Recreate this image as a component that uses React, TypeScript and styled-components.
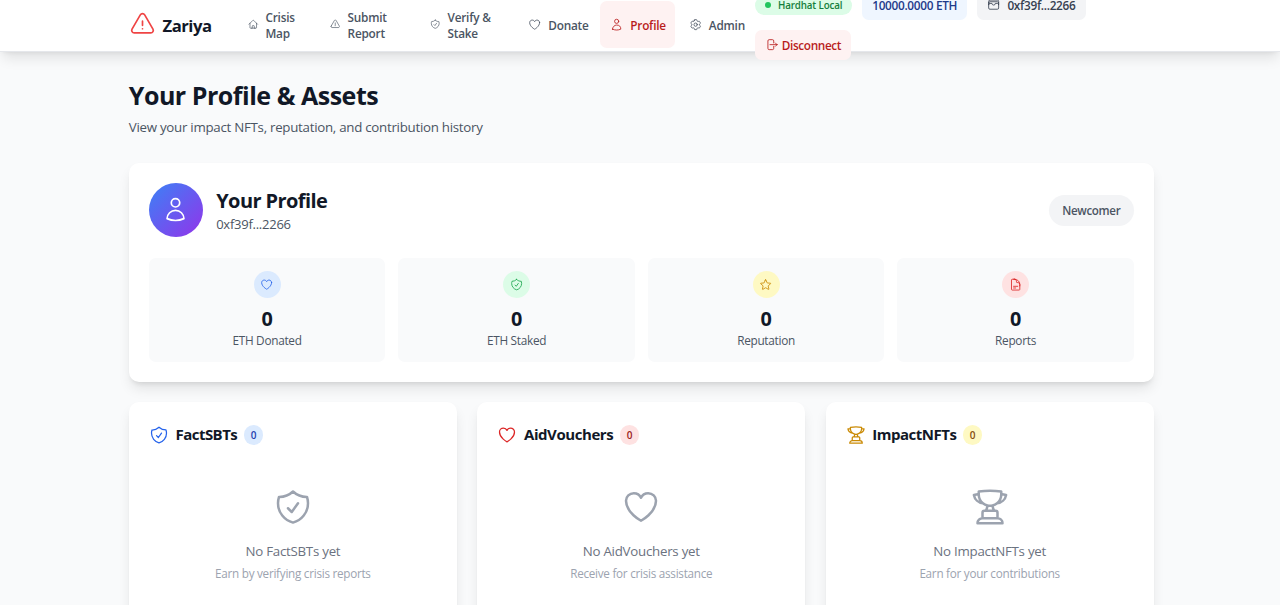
import React from "react";
import styled, { createGlobalStyle } from "styled-components";
import {
  HiOutlineArrowRightOnRectangle,
  HiOutlineCog6Tooth,
  HiOutlineDocumentText,
  HiOutlineExclamationTriangle,
  HiOutlineHeart,
  HiOutlineHome,
  HiOutlineShieldCheck,
  HiOutlineStar,
  HiOutlineTrophy,
  HiOutlineUser,
  HiOutlineWallet,
} from "react-icons/hi2";

const GlobalStyle = createGlobalStyle`
  *, *::before, *::after { box-sizing: border-box; }
  html { background: #f9fafb; }
  body {
    margin: 0;
    height: 605px;
    overflow: hidden;
    background: #f9fafb;
    color: #111827;
    font-family: "Open Sans", "Noto Sans", sans-serif;
  }
  h1, h2, h3, p { margin: 0; }
  svg { display: block; flex-shrink: 0; }
  button { font: inherit; border: 0; }
`;

const Page = styled.div`
  height: 605px;
  overflow: hidden;
`;

const Header = styled.header`
  position: relative;
  display: flex;
  align-items: center;
  height: 51.5px;
  padding: 0 0 2px 129px;
  background: #fff;
  border-bottom: 1px solid #e5e7eb;
  box-shadow: 0 8px 12.5px -2.5px rgba(0, 0, 0, 0.1), 0 3.3px 5px -3.3px rgba(0, 0, 0, 0.1);
`;

const Brand = styled.div`
  display: flex;
  align-items: center;
  gap: 6.5px;
  width: 109px;
  flex-shrink: 0;
  svg { color: #ef4444; }
`;

const BrandName = styled.span`
  font-size: 16.7px;
  font-weight: 700;
  line-height: 23px;
  padding-top: 3px;
  letter-spacing: -0.5px;
`;

const Nav = styled.nav`
  display: flex;
  align-items: center;
  gap: 3.33px;
`;

const NavItem = styled.a<{ $width: number; $active?: boolean }>`
  display: flex;
  align-items: center;
  gap: 6.67px;
  flex-shrink: 0;
  width: ${(p) => p.$width}px;
  height: 47px;
  padding: 0 0 0 10.3px;
  border-radius: 6.7px;
  font-size: 11.8px;
  font-weight: 600;
  line-height: 16.7px;
  letter-spacing: -0.22px;
  color: ${(p) => (p.$active ? "#b91c1c" : "#4b5563")};
  background: ${(p) => (p.$active ? "#fef2f2" : "transparent")};
  span { padding-top: 2px; }
`;

const Wallet = styled.div`
  display: flex;
  flex-wrap: wrap;
  align-items: center;
  align-content: center;
  gap: 10px;
  width: 350px;
  flex-shrink: 0;
  height: 70px;
  margin-top: 1.6px;
  margin-left: 0.3px;
`;

const Network = styled.div`
  display: flex;
  align-items: center;
  gap: 6.7px;
  width: 97.5px;
  height: 19px;
  padding: 0 9.7px;
  border-radius: 10px;
  background: #dcfce7;
  color: #15803d;
  font-size: 9.8px;
  font-weight: 600;
  letter-spacing: -0.15px;
  white-space: nowrap;
`;

const Dot = styled.i`
  width: 6.7px;
  height: 6.7px;
  flex-shrink: 0;
  border-radius: 50%;
  background: #22c55e;
`;

const Chip = styled.div<{ $width: number; $bg: string; $color: string; $gap?: number; $track?: number }>`
  display: flex;
  align-items: center;
  justify-content: center;
  gap: ${(p) => p.$gap ?? 0}px;
  width: ${(p) => p.$width}px;
  height: 30px;
  padding: 0;
  border-radius: 6.7px;
  background: ${(p) => p.$bg};
  color: ${(p) => p.$color};
  font-size: 11.8px;
  font-weight: 600;
  white-space: nowrap;
  letter-spacing: ${(p) => p.$track ?? 0}px;
`;

const Main = styled.main`
  width: 1025px;
  margin-left: 128.8px;
  padding-top: 26px;
`;

const Title = styled.h1`
  font-size: 25px;
  line-height: 34px;
  font-weight: 700;
  letter-spacing: -0.48px;
`;

const Subtitle = styled.p`
  margin-top: 5px;
  font-size: 13.3px;
  line-height: 20px;
  letter-spacing: -0.27px;
  color: #4b5563;
`;

const Card = styled.section`
  background: #fff;
  border-radius: 10px;
  box-shadow: 0 8px 12.5px -2.5px rgba(0, 0, 0, 0.1), 0 3.3px 5px -3.3px rgba(0, 0, 0, 0.1);
`;

const ProfileCard = styled(Card)`
  height: 218.6px;
  margin-top: 26.8px;
  padding: 19.6px 20px;
`;

const ProfileHead = styled.div`
  display: flex;
  align-items: center;
  gap: 13.4px;
  height: 54px;
`;

const Avatar = styled.div`
  display: grid;
  place-items: center;
  width: 54px;
  height: 54px;
  border-radius: 50%;
  color: #fff;
  background: linear-gradient(135deg, #3b82f6, #9333ea);
`;

const Identity = styled.div`
  flex: 1;
  padding-top: 2px;
`;

const Name = styled.h2`
  font-size: 20px;
  line-height: 27px;
  font-weight: 700;
  letter-spacing: -0.58px;
`;

const Address = styled.p`
  font-size: 13px;
  line-height: 20px;
  letter-spacing: -0.25px;
  color: #4b5563;
`;

const Level = styled.span`
  display: grid;
  place-items: center;
  width: 85px;
  height: 31px;
  margin-top: 1px;
  border-radius: 16px;
  background: #f3f4f6;
  color: #4b5563;
  font-size: 11.6px;
  font-weight: 600;
  letter-spacing: -0.35px;
  padding-top: 1px;
`;

const Stats = styled.div`
  display: grid;
  grid-template-columns: repeat(4, 1fr);
  gap: 13px;
  margin-top: 20.8px;
`;

const Stat = styled.div`
  display: flex;
  flex-direction: column;
  align-items: center;
  height: 104px;
  padding-top: 13.3px;
  border-radius: 6.7px;
  background: #f9fafb;
`;

const StatIcon = styled.div<{ $bg: string; $color: string }>`
  display: grid;
  place-items: center;
  width: 27px;
  height: 27px;
  border-radius: 50%;
  background: ${(p) => p.$bg};
  color: ${(p) => p.$color};
`;

const StatValue = styled.strong`
  margin-top: 7px;
  font-size: 19.8px;
  line-height: 27px;
  font-weight: 700;
`;

const StatLabel = styled.span`
  font-size: 11.8px;
  line-height: 17px;
  color: #4b5563;
  letter-spacing: -0.28px;
`;

const Collections = styled.div`
  display: grid;
  grid-template-columns: repeat(3, 328.2px);
  gap: 20.2px;
  margin-top: 20.3px;
`;

const Collection = styled(Card)`
  height: 260px;
  padding: 19.8px 20px;
`;

const CollectionHead = styled.div<{ $color: string }>`
  display: flex;
  align-items: center;
  gap: 6.8px;
  height: 26px;
  svg { color: ${(p) => p.$color}; }
`;

const CollectionName = styled.h3<{ $track: number }>`
  font-size: 15px;
  line-height: 23px;
  font-weight: 700;
  letter-spacing: ${(p) => p.$track}px;
`;

const Count = styled.span<{ $bg: string; $color: string }>`
  display: grid;
  place-items: center;
  width: 19px;
  height: 20px;
  border-radius: 10px;
  background: ${(p) => p.$bg};
  color: ${(p) => p.$color};
  font-size: 10px;
  font-weight: 600;
`;

const Empty = styled.div`
  display: flex;
  flex-direction: column;
  align-items: center;
  padding-top: 39px;
  color: #9ca3af;
`;

const EmptyTitle = styled.p`
  margin-top: 14px;
  font-size: 13.3px;
  line-height: 20px;
  color: #6b7280;
  letter-spacing: -0.25px;
`;

const EmptyHint = styled.p`
  margin-top: 4px;
  font-size: 11.7px;
  line-height: 17px;
  letter-spacing: -0.26px;
`;

const navItems = [
  { label: ["Crisis", "Map"], icon: HiOutlineHome, width: 78.8, size: 10.5 },
  { label: ["Submit", "Report"], icon: HiOutlineExclamationTriangle, width: 96.6, size: 10.5 },
  { label: ["Verify &", "Stake"], icon: HiOutlineShieldCheck, width: 94.6, size: 10.5 },
  { label: ["Donate"], icon: HiOutlineHeart, width: 78.7, size: 13.3 },
  { label: ["Profile"], icon: HiOutlineUser, width: 75.3, size: 13.3, active: true },
  { label: ["Admin"], icon: HiOutlineCog6Tooth, width: 76, size: 13.3 },
];

const stats = [
  { label: "ETH Donated", icon: HiOutlineHeart, bg: "#dbeafe", color: "#2563eb" },
  { label: "ETH Staked", icon: HiOutlineShieldCheck, bg: "#dcfce7", color: "#16a34a" },
  { label: "Reputation", icon: HiOutlineStar, bg: "#fef9c3", color: "#ca8a04" },
  { label: "Reports", icon: HiOutlineDocumentText, bg: "#fee2e2", color: "#dc2626" },
];

const collections = [
  { name: "FactSBTs", hint: "Earn by verifying crisis reports", icon: HiOutlineShieldCheck, color: "#2563eb", bg: "#dbeafe", count: "#1e40af", track: -0.55 },
  { name: "AidVouchers", hint: "Receive for crisis assistance", icon: HiOutlineHeart, color: "#dc2626", bg: "#fee2e2", count: "#991b1b", track: -0.43 },
  { name: "ImpactNFTs", hint: "Earn for your contributions", icon: HiOutlineTrophy, color: "#ca8a04", bg: "#fef9c3", count: "#854d0e", track: -0.5 },
];

export default function App() {
  return (
    <Page>
      <GlobalStyle />
      <Header>
        <Brand>
          <HiOutlineExclamationTriangle size={27} />
          <BrandName>Zariya</BrandName>
        </Brand>
        <Nav>
          {navItems.map(({ label, icon: Icon, width, size, active }) => (
            <NavItem key={label[0]} $width={width} $active={active}>
              <Icon size={size} />
              <span>
                {label.map((line, i) => (
                  <React.Fragment key={line}>
                    {i > 0 && <br />}
                    {line}
                  </React.Fragment>
                ))}
              </span>
            </NavItem>
          ))}
        </Nav>
        <Wallet>
          <Network>
            <Dot />
            Hardhat Local
          </Network>
          <Chip $width={104.5} $bg="#eff6ff" $color="#1e3a8a" $track={-0.3}>10000.0000 ETH</Chip>
          <Chip $width={109} $bg="#f3f4f6" $color="#374151" $gap={6.7} $track={-0.3}>
            <HiOutlineWallet size={13.3} />
            0xf39f...2266
          </Chip>
          <Chip as="button" $width={96} $bg="#fef2f2" $color="#b91c1c" $gap={3.8} $track={-0.38}>
            <HiOutlineArrowRightOnRectangle size={13.3} />
            Disconnect
          </Chip>
        </Wallet>
      </Header>
      <Main>
        <Title>Your Profile &amp; Assets</Title>
        <Subtitle>View your impact NFTs, reputation, and contribution history</Subtitle>
        <ProfileCard>
          <ProfileHead>
            <Avatar>
              <HiOutlineUser size={27} />
            </Avatar>
            <Identity>
              <Name>Your Profile</Name>
              <Address>0xf39f...2266</Address>
            </Identity>
            <Level>Newcomer</Level>
          </ProfileHead>
          <Stats>
            {stats.map(({ label, icon: Icon, bg, color }) => (
              <Stat key={label}>
                <StatIcon $bg={bg} $color={color}>
                  <Icon size={13.3} />
                </StatIcon>
                <StatValue>0</StatValue>
                <StatLabel>{label}</StatLabel>
              </Stat>
            ))}
          </Stats>
        </ProfileCard>
        <Collections>
          {collections.map(({ name, hint, icon: Icon, color, bg, count, track }) => (
            <Collection key={name}>
              <CollectionHead $color={color}>
                <Icon size={20} />
                <CollectionName $track={track}>{name}</CollectionName>
                <Count $bg={bg} $color={count}>0</Count>
              </CollectionHead>
              <Empty>
                <Icon size={40} />
                <EmptyTitle>No {name} yet</EmptyTitle>
                <EmptyHint>{hint}</EmptyHint>
              </Empty>
            </Collection>
          ))}
        </Collections>
      </Main>
    </Page>
  );
}
